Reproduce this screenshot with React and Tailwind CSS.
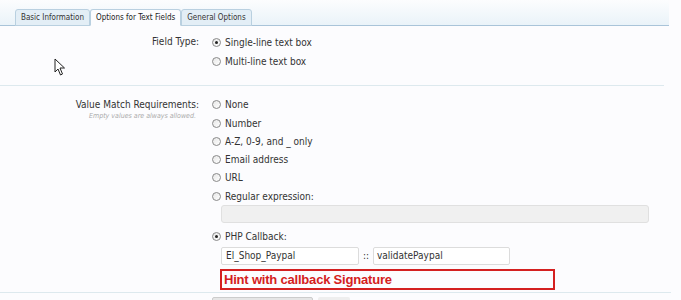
import React from 'react';

const font = { fontFamily: '"DejaVu Sans Condensed", "DejaVu Sans", Tahoma, sans-serif' };

function Radio({ checked }) {
  return (
    <span className="relative inline-block w-[9px] h-[9px] rounded-full border border-[#8a8a8a] bg-gradient-to-br from-[#e6e6e6] to-white shrink-0">
      {checked && <span className="absolute left-[2px] top-[2px] w-[3px] h-[3px] rounded-full bg-[#222]" />}
    </span>
  );
}

function Option({ label, checked, className = '' }) {
  return (
    <div className={`flex items-center gap-[4px] h-[18.3px] ${className}`}>
      <Radio checked={checked} />
      <span>{label}</span>
    </div>
  );
}

const tabs = ['Basic Information', 'Options for Text Fields', 'General Options'];

export default function App() {
  return (
    <div className="w-[681px] h-[300px] overflow-hidden bg-[#fcfcfe] text-[10px] text-[#333]" style={font}>
      <div className="h-[26px] bg-gradient-to-b from-[#fcfdfe] to-[#eaf3f9] border-b border-[#a9c4d9] mr-[12px] flex items-end pl-[15px]">
        {tabs.map((t, i) => (
          <div
            key={t}
            className={`h-[17px] -mb-px px-[5px] flex items-center text-[8px] border border-[#b9d0e0] rounded-t-[3px] ${
              i === 1 ? 'bg-[#fcfcfe] border-b-[#fcfcfe] text-[#222]' : 'bg-[#e3eef6] text-[#333]'
            }`}
          >
            {t}
          </div>
        ))}
      </div>

      <div className="grid grid-cols-[199px_1fr] gap-x-[13px] pt-[7px] pb-[14px] border-b border-[#dde9ee] mr-[17px]">
        <div className="text-right h-[18px] leading-[18px]">Field Type:</div>
        <div>
          <Option label="Single-line text box" checked />
          <Option label="Multi-line text box" className="mt-px" />
        </div>
      </div>

      <div className="grid grid-cols-[199px_1fr] gap-x-[13px] pt-[10px] pb-[2px] border-b border-[#dde9ee] mr-[10px] relative">
        <div className="text-right">
          <div className="h-[18px] leading-[18px]">Value Match Requirements:</div>
          <div className="text-[7px] italic text-[#aaa] -mt-[3px] pr-[3px]">Empty values are always allowed.</div>
        </div>
        <div>
          <Option label="None" />
          <Option label="Number" />
          <Option label="A-Z, 0-9, and _ only" />
          <Option label="Email address" />
          <Option label="URL" />
          <Option label="Regular expression:" />
          <div className="ml-[9px] w-[428px] h-[18px] bg-[#f0f0f0] border border-[#e0e0e0] rounded-[3px]" />
          <Option label="PHP Callback:" checked className="mt-[4px]" />
          <div className="flex items-center ml-[9px] mt-px">
            <div className="w-[138px] h-[18px] bg-white border border-[#dcdcdc] rounded-[2px] px-[4px] leading-[16px]">El_Shop_Paypal</div>
            <span className="w-[14px] text-center">::</span>
            <div className="w-[137px] h-[18px] bg-white border border-[#dcdcdc] rounded-[2px] px-[3px] leading-[16px]">validatePaypal</div>
          </div>
          <div
            className="ml-[8px] mt-[4px] w-[335px] h-[21px] border-2 border-[#d42020] text-[#d42020] font-bold text-[13px] px-[2px] leading-[17px] tracking-[-0.2px]"
            style={{ fontFamily: '"Liberation Sans", Arial, sans-serif' }}
          >
            Hint with callback Signature
          </div>
        </div>
      </div>

      <div className="flex gap-[5px] pl-[212px] pt-[4px]">
        <div className="w-[101px] h-[10px] bg-[#e6e6e6] border border-[#ccc] rounded-[2px]" />
        <div className="w-[32px] h-[10px] bg-[#eee] rounded-[2px]" />
      </div>

      <svg className="absolute left-[54px] top-[58px]" width="12" height="19" viewBox="0 0 12 19">
        <path d="M1 1 L1 14 L4 11 L6.5 17 L8.5 16 L6 10 L10.5 10 Z" fill="white" stroke="#222" strokeWidth="1" strokeLinejoin="round" />
      </svg>
    </div>
  );
}
